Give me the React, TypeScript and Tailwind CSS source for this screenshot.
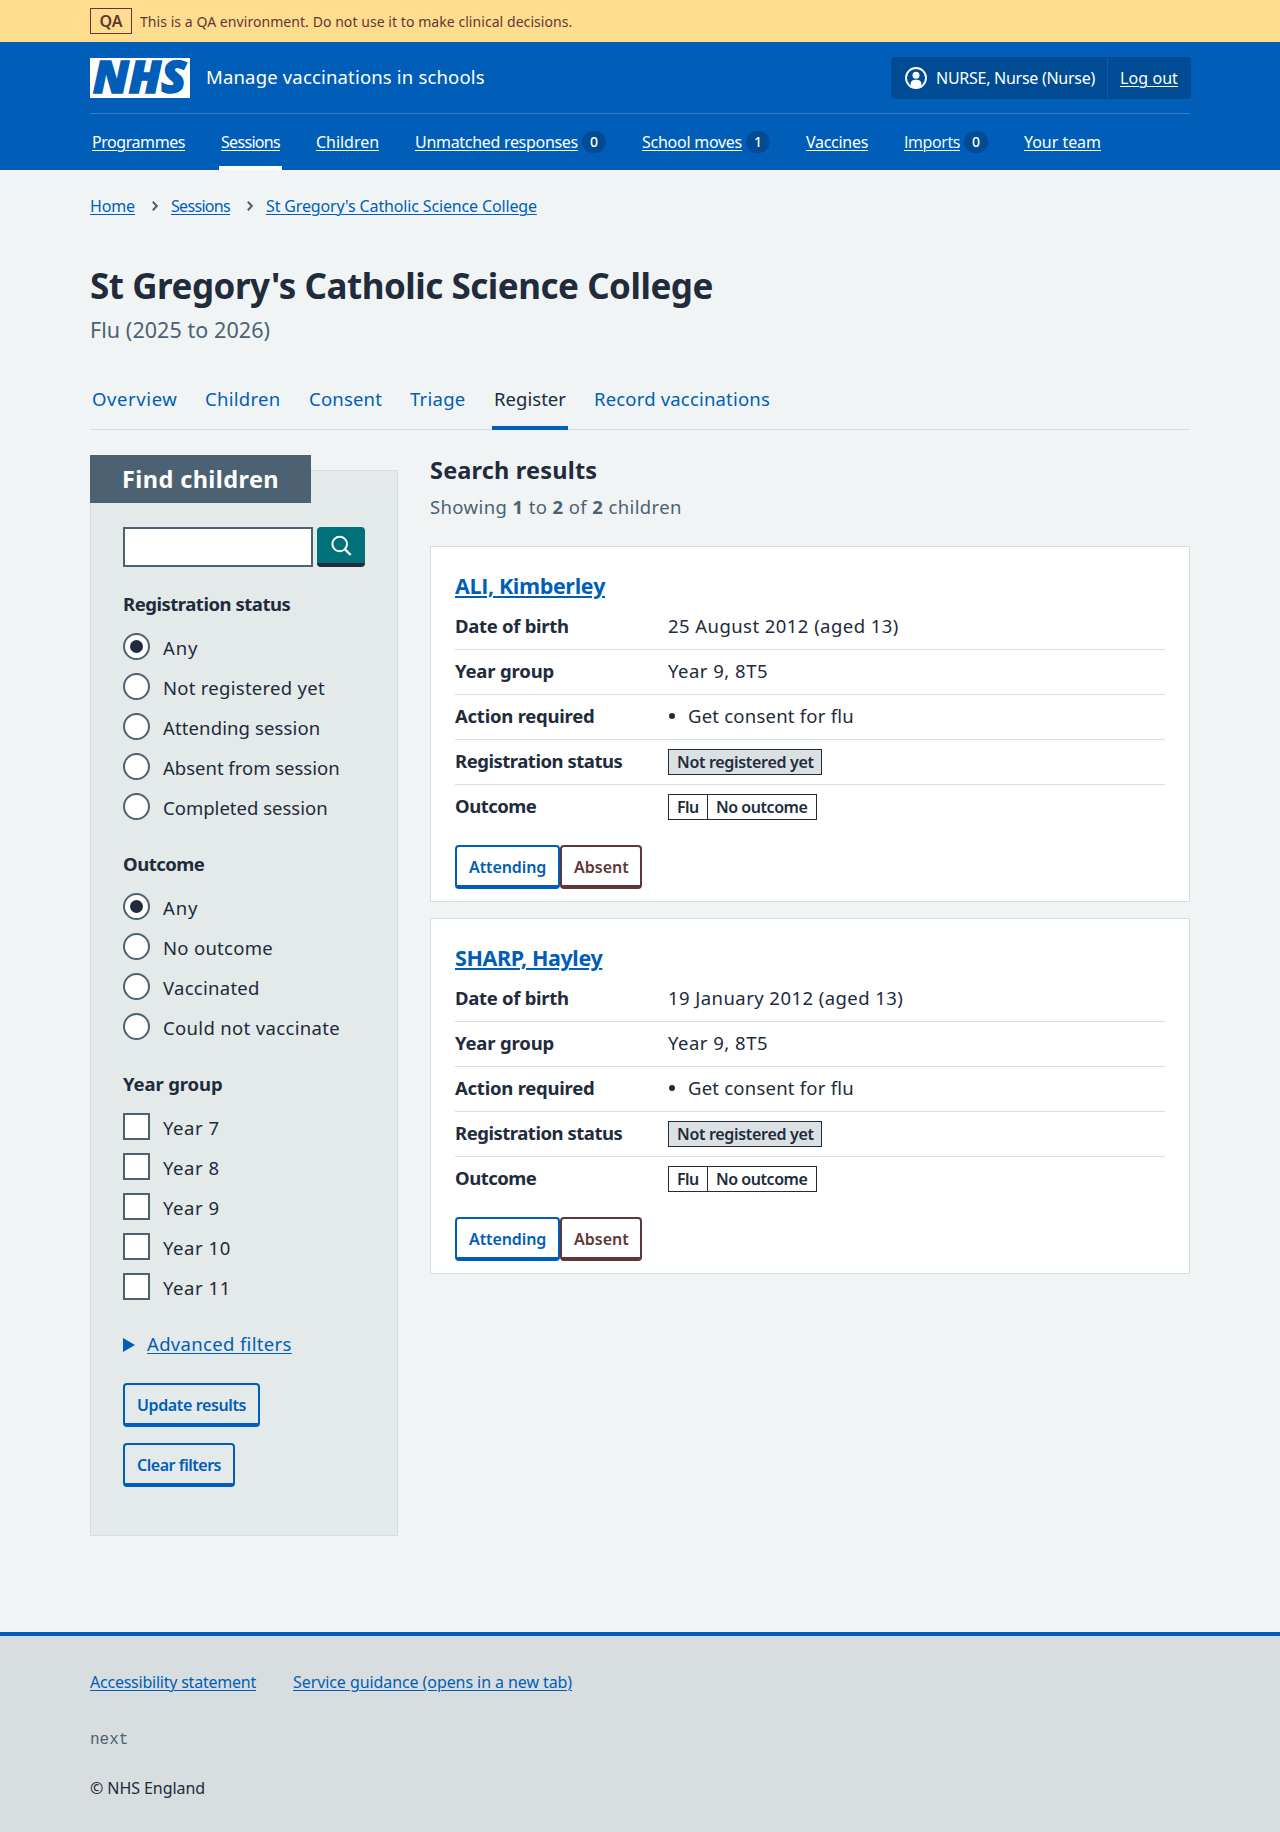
import type { ReactNode } from "react";

const noto = "font-['Noto_Sans','Open_Sans',sans-serif]";
const link = "underline decoration-1 underline-offset-[2px]";

function Count({ children }: { children: ReactNode }) {
  return (
    <span className="ml-1 h-[22px] w-6 shrink-0 rounded-[12px] bg-[#004b93] text-center text-[14px] leading-[22px] font-medium">
      {children}
    </span>
  );
}

type NavItem = { label: string; width: string; text: string; count?: string; current?: boolean };

const navItems: NavItem[] = [
  { label: "Programmes", width: "w-[93px]", text: "tracking-[-0.44px]" },
  { label: "Sessions", width: "w-[59px]", text: "tracking-[-0.69px]", current: true },
  { label: "Children", width: "w-[63px]", text: "tracking-[-0.04px]" },
  { label: "Unmatched responses", width: "w-[163px]", text: "tracking-[-0.3px]", count: "0" },
  { label: "School moves", width: "w-[100px]", text: "tracking-[-0.26px]", count: "1" },
  { label: "Vaccines", width: "w-[62px]", text: "tracking-[-0.29px]" },
  { label: "Imports", width: "w-[56px]", text: "font-['Open_Sans'] tracking-[-0.37px]", count: "0" },
  { label: "Your team", width: "w-[77px]", text: "tracking-[-0.04px]" },
];

function Header() {
  return (
    <header className="h-32 bg-[#005eb8] text-white">
      <div className="mx-auto w-[1100px] pt-[15px]">
        <div className="flex h-[42px] items-center">
          <svg width="100" height="40" viewBox="0 0 100 40" className="overflow-visible bg-white" aria-label="NHS">
            <text
              x="3"
              y="35.3"
              textLength="93"
              lengthAdjust="spacingAndGlyphs"
              fontFamily="Open Sans"
              fontSize="43.5"
              fontWeight="800"
              fontStyle="italic"
              fill="#005eb8"
              stroke="#005eb8"
              strokeWidth="1.5"
            >
              NHS
            </text>
          </svg>
          <span className="mb-0.5 ml-4 text-[18.5px] leading-7 tracking-[0.17px]">Manage vaccinations in schools</span>
          <div className="-mr-px ml-auto flex h-[42px] w-[300px] rounded bg-[#004b93]">
            <div className="my-px flex w-[217px] items-center border-r border-[#005eb8] pl-3.5">
              <svg width="22" height="22" viewBox="0 0 22 22" fill="#fff">
                <circle cx="11" cy="11" r="10" fill="none" stroke="#fff" strokeWidth="1.9" />
                <circle cx="11" cy="8.3" r="3.5" />
                <path d="M5.6 19V17a4.2 4.2 0 0 1 4.2-4.2h2.4a4.2 4.2 0 0 1 4.2 4.2V19a10 10 0 0 1-10.8 0Z" />
              </svg>
              <span className="ml-[9px] leading-6 tracking-[-0.27px] whitespace-nowrap">NURSE, Nurse (Nurse)</span>
            </div>
            <a className={`ml-3 self-center leading-6 tracking-[0.08px] ${link}`}>Log out</a>
          </div>
        </div>
        <nav className="mt-3.5 flex gap-8 border-t border-[#337ec6]">
          {navItems.map((item) => (
            <div
              key={item.label}
              className={`flex h-14 border-b-4 px-0.5 pt-4 ${item.current ? "border-white" : "border-transparent"}`}
            >
              <a className={`leading-6 whitespace-nowrap ${link} ${item.width} ${item.text}`}>{item.label}</a>
              {item.count && (
                <span className="flex pt-px">
                  <Count>{item.count}</Count>
                </span>
              )}
            </div>
          ))}
        </nav>
      </div>
    </header>
  );
}

function Chevron() {
  return (
    <svg width="6" height="10" viewBox="0 0 6 10" className="mt-[7px]" fill="none" stroke="#4c6272" strokeWidth="2">
      <path d="M0.8 0.8 4.8 5 0.8 9.2" />
    </svg>
  );
}

const tabs = [
  { label: "Overview", style: "w-[89px] tracking-[0.6px]" },
  { label: "Children", style: "w-[80px] tracking-[0.3px]" },
  { label: "Consent", style: "w-[77px] tracking-[0.2px]" },
  { label: "Triage", style: "w-[60px] tracking-[0.25px]" },
  { label: "Register", style: "w-[76px] tracking-[0.04px]", current: true },
  { label: "Record vaccinations", style: "tracking-[0.18px]" },
];

type Option = { label: string; text?: string; checked?: boolean };

const statuses: Option[] = [
  { label: "Any", text: "tracking-[0.9px]", checked: true },
  { label: "Not registered yet", text: "tracking-[0.27px]" },
  { label: "Attending session", text: "tracking-[0.12px]" },
  { label: "Absent from session", text: "tracking-[-0.01px]" },
  { label: "Completed session", text: "tracking-[0.01px]" },
];

const outcomes: Option[] = [
  { label: "Any", text: "tracking-[0.9px]", checked: true },
  { label: "No outcome", text: "tracking-[0.28px]" },
  { label: "Vaccinated", text: "tracking-[0.28px]" },
  { label: "Could not vaccinate", text: "tracking-[0.34px]" },
];

const years: Option[] = ["Year 7", "Year 8", "Year 9", "Year 10", "Year 11"].map((label) => ({
  label,
  text: "tracking-[0.55px]",
}));

function Fieldset({ legend, text, options, square }: { legend: string; text: string; options: Option[]; square?: boolean }) {
  return (
    <div className="mt-[23px]">
      <h3 className={`mb-[9px] text-[18.5px] leading-7 font-bold ${text}`}>{legend}</h3>
      {options.map((o) => (
        <label key={o.label} className="flex h-10">
          <span
            className={`mt-1.5 flex size-[27px] items-center justify-center border-2 border-[#4c6272] bg-white ${square ? "" : "rounded-full"}`}
          >
            {o.checked && <span className="size-[13px] rounded-full bg-[#212b3c]" />}
          </span>
          <span className={`mt-[7px] ml-[13px] text-[18.5px] leading-7 ${o.text ?? ""}`}>{o.label}</span>
        </label>
      ))}
    </div>
  );
}

function Button({ children, className }: { children: ReactNode; className: string }) {
  return (
    <button className={`block h-11 rounded border-2 border-b-4 px-3 pt-2 pb-1.5 text-left leading-6 font-semibold whitespace-nowrap ${className}`}>
      {children}
    </button>
  );
}

function Filters() {
  return (
    <aside className="mt-10 h-[1066px] w-[308px] border border-[#d8dde0] bg-[#e4e9e9]">
      <h2 className="-mt-4 -ml-px h-12 w-[221px] bg-[#4c6272] py-2 pl-8 text-[23.5px] leading-8 font-bold tracking-[0.4px] text-white">
        Find children
      </h2>
      <div className="px-8">
        <div className="mt-6 flex gap-1">
          <div className="h-10 w-[190px] border-2 border-[#4c6272] bg-white" />
          <button className="h-10 w-12 rounded border-b-4 border-[#212b3c] bg-[#00707a]" aria-label="Search">
            <svg width="48" height="36" viewBox="0 0 48 36" fill="none" stroke="#fff" strokeWidth="2">
              <circle cx="22.7" cy="17" r="7.3" />
              <path d="M27.8 22.1 33.7 28" strokeWidth="2.4" />
            </svg>
          </button>
        </div>
        <Fieldset legend="Registration status" text="tracking-[-0.48px]" options={statuses} />
        <Fieldset legend="Outcome" text="tracking-[-0.5px]" options={outcomes} />
        <Fieldset legend="Year group" text="tracking-[-0.12px]" options={years} square />
        <div className="mt-[23px] flex text-[#005eb8]">
          <svg width="12" height="14" viewBox="0 0 12 14" className="mt-2" fill="currentColor">
            <path d="M0 0 12 7 0 14Z" />
          </svg>
          <span className={`ml-3 text-[18.5px] leading-7 tracking-[0.33px] ${link}`}>Advanced filters</span>
        </div>
        <Button className="mt-[25px] w-[137px] border-[#005eb8] tracking-[-0.38px] text-[#005eb8]">Update results</Button>
        <Button className="mt-4 w-[112px] border-[#005eb8] tracking-[-0.48px] text-[#005eb8]">Clear filters</Button>
      </div>
    </aside>
  );
}

function Row({ label, text, last, children }: { label: string; text: string; last?: boolean; children: ReactNode }) {
  return (
    <div className={`flex h-[45px] pt-[7px] text-[18.5px] leading-7 ${last ? "" : "border-b border-[#d8dde0]"}`}>
      <dt className={`w-[213px] font-bold ${text}`}>{label}</dt>
      <dd>{children}</dd>
    </div>
  );
}

function ChildCard({ name, nameStyle, dob }: { name: string; nameStyle: string; dob: string }) {
  return (
    <article className="mb-4 h-[356px] border border-[#d8dde0] bg-white px-6 pt-6">
      <h3 className={`mb-1 text-[21.5px] leading-[30px] font-bold text-[#005eb8] underline decoration-2 underline-offset-[2px] ${nameStyle}`}>
        {name}
      </h3>
      <dl>
        <Row label="Date of birth" text="tracking-[-0.29px]">
          <span className="tracking-[0.44px]">{dob}</span>
        </Row>
        <Row label="Year group" text="tracking-[-0.17px]">
          <span className="tracking-[0.49px]">Year 9, 8T5</span>
        </Row>
        <Row label="Action required" text="tracking-[-0.24px]">
          <span className="flex items-center tracking-[0.22px]">
            <span className="mr-[13px] ml-px size-1.5 rounded-full bg-[#212b3c]" />
            Get consent for flu
          </span>
        </Row>
        <Row label="Registration status" text="tracking-[-0.48px]">
          <span className="mt-0.5 block h-[26px] w-[154px] border border-[#212b3c] bg-[#dbe0e3] px-2 text-[16px] leading-6 font-semibold tracking-[-0.31px] whitespace-nowrap">
            Not registered yet
          </span>
        </Row>
        <Row label="Outcome" text="tracking-[-0.5px]" last>
          <span className="mt-0.5 flex h-[26px] w-[149px] border border-[#212b3c] text-[16px] leading-6 font-semibold whitespace-nowrap">
            <span className="w-[39px] border-r border-[#212b3c] pl-2 tracking-[-0.6px]">Flu</span>
            <span className="pl-2 tracking-[-0.45px]">No outcome</span>
          </span>
        </Row>
      </dl>
      <div className="mt-[15px] flex">
        <Button className="w-[105px] border-[#005eb8] tracking-[-0.1px] text-[#005eb8]">Attending</Button>
        <Button className="w-[82px] border-[#5e3838] text-[#5e3838]">Absent</Button>
      </div>
    </article>
  );
}

export default function App() {
  return (
    <div className={`min-h-[1832px] bg-[#f0f4f5] text-[16px] text-[#212b3c] ${noto}`}>
      <div className="h-[42px] bg-[#ffdc8e] text-[#5e3838]">
        <div className="mx-auto flex h-full w-[1100px] items-center">
          <strong className="h-[26px] w-[42px] border border-[#5e3838] text-center text-[16px] leading-6 font-semibold">QA</strong>
          <span className="ml-2 text-[14px] leading-[21px] tracking-[0.06px]">
            This is a QA environment. Do not use it to make clinical decisions.
          </span>
        </div>
      </div>

      <Header />

      <main className="mx-auto w-[1100px] pt-6">
        <nav className="flex leading-6 text-[#005eb8]">
          <a className={`w-[45px] tracking-[-0.13px] ${link}`}>Home</a>
          <span className="ml-[17px] flex w-[19px]">
            <Chevron />
          </span>
          <a className={`w-[59px] tracking-[-0.69px] ${link}`}>Sessions</a>
          <span className="ml-[17px] flex w-[19px]">
            <Chevron />
          </span>
          <a className={`tracking-[-0.15px] ${link}`}>St Gregory's Catholic Science College</a>
        </nav>

        <h1 className="mt-[45px] text-[35px] leading-[45px] font-bold tracking-[-0.48px]">
          St Gregory's Catholic Science College
        </h1>
        <p className="mt-[7px] text-[21.5px] leading-[30px] tracking-[0.07px] text-[#4c6272]">Flu (2025 to 2026)</p>

        <nav className="mt-7 flex h-[57px] gap-6 border-b border-[#d8dde0] text-[18.5px] leading-7 text-[#005eb8]">
          {tabs.map((t) => (
            <a
              key={t.label}
              className={`h-[57px] border-b-4 px-0.5 pt-3 whitespace-nowrap ${t.style} ${
                t.current ? "border-[#005eb8] text-[#212b3c]" : "border-transparent"
              }`}
            >
              {t.label}
            </a>
          ))}
        </nav>

        <div className="flex items-start gap-8">
          <Filters />
          <section className="flex-1">
            <h2 className="mt-[23px] text-[23.5px] leading-[34px] font-bold tracking-[0.18px]">Search results</h2>
            <p className="mt-1.5 mb-[25px] text-[18.5px] leading-7 tracking-[0.39px] text-[#4c6272]">
              Showing <b>1</b> to <b>2</b> of <b>2</b> children
            </p>
            <ChildCard name="ALI, Kimberley" nameStyle="font-['Open_Sans'] tracking-[-0.38px]" dob="25 August 2012 (aged 13)" />
            <ChildCard name="SHARP, Hayley" nameStyle="tracking-[-0.38px]" dob="19 January 2012 (aged 13)" />
          </section>
        </div>
      </main>

      <footer className="mt-24 h-[200px] border-t-4 border-[#005eb8] bg-[#d8dde0] pt-[34px]">
        <div className="mx-auto w-[1100px] leading-6">
          <div className="flex text-[#005eb8]">
            <div className="w-[203px]">
              <a className={`tracking-[-0.23px] ${link}`}>Accessibility statement</a>
            </div>
            <a className={`tracking-[-0.08px] ${link}`}>Service guidance (opens in a new tab)</a>
          </div>
          <p className="mt-[34px] font-['Liberation_Mono',monospace] text-[#4c6272]">next</p>
          <p className="mt-6 tracking-[-0.07px]">© NHS England</p>
        </div>
      </footer>
    </div>
  );
}
